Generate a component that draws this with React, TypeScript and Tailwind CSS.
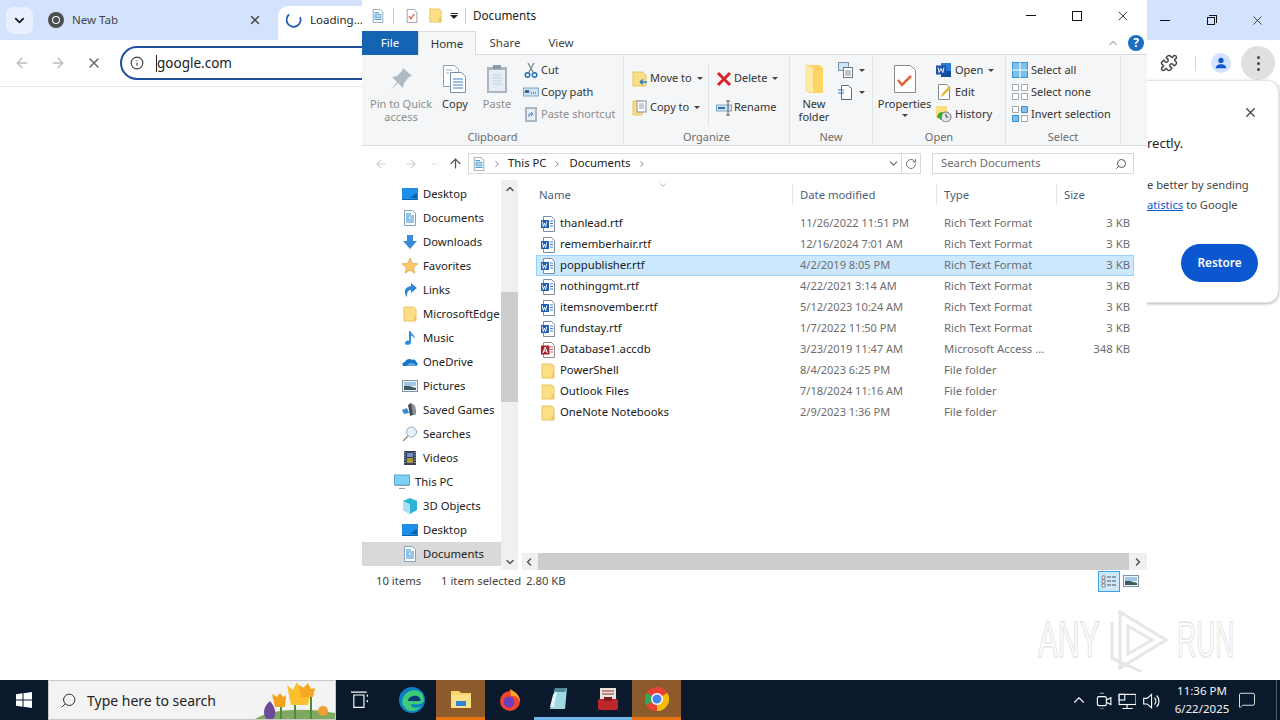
import type { ReactNode } from "react";
import { ArrowLeft, ArrowRight, ArrowUp, ChevronDown, ChevronLeft, ChevronRight, ChevronUp, Info, MessageSquare, Puzzle, RotateCw, Search, X } from "lucide-react";

const Svg = ({ s = 16, v = 16, children }: { s?: number; v?: number; children: ReactNode }) => (
  <svg width={s} height={s} viewBox={`0 0 ${v} ${v}`} className="shrink-0">
    {children}
  </svg>
);

const FolderIcon = ({ s = 16 }: { s?: number }) => (
  <Svg s={s}>
    <path d="M2 1h9.500L14 3v12H2z" fill="#fcdf85" stroke="#e8c465" />
    <path d="M11.500 10h2.500v5h-2.500z" fill="#eec95c" />
  </Svg>
);

const DocsIcon = ({ s = 16 }: { s?: number }) => (
  <Svg s={s}>
    <path d="M2.500.500h8l3 3v12h-11z" fill="#fff" stroke="#8aa0b4" />
    <path d="M4 4h5M4 6h8M8 8h4M4 8h3M4 10h8M4 12h8" stroke="#2f8fd0" />
    <path d="M4 7h3v3H4z" fill="#7fbfe8" />
  </Svg>
);

const WordFile = () => (
  <Svg>
    <path d="M3.500.500h8l3 3v12h-11z" fill="#fff" stroke="#7d8da0" />
    <path d="M10 5h3M10 7.500h3M10 10h3" stroke="#4a7ab8" />
    <rect x="1" y="4" width="8" height="8" fill="#1f5fb0" />
    <path d="M2.300 5.500l1 5 1.200-3.500 1.200 3.500 1-5" stroke="#fff" strokeWidth="0.9" fill="none" />
  </Svg>
);

const AccessFile = () => (
  <Svg>
    <path d="M3.500.500h8l3 3v12h-11z" fill="#fff" stroke="#9a8a8a" />
    <path d="M10 5h3M10 7.500h3M10 10h3" stroke="#b86a6a" />
    <rect x="1" y="3.500" width="8.500" height="9" fill="#a4262c" />
    <path d="M3 11l2.200-6 2.200 6M3.800 9h2.800" stroke="#fff" fill="none" />
  </Svg>
);

const Caret = () => <span className="ml-[5px] inline-block border-x-[3px] border-t-[3px] border-x-transparent border-t-[#444] align-middle" />;

const DesktopIcon = () => (
  <Svg>
    <rect x="0" y="2" width="16" height="11" fill="#1d8fe6" />
    <path d="M0 13h16v1H0zM9 11l6-4v5H9z" fill="#0b5fa8" />
  </Svg>
);

const PicturesIcon = () => (
  <Svg>
    <rect x="0.500" y="2.500" width="15" height="11" fill="#f2f6fa" stroke="#7f93a6" />
    <path d="M2 4h12v4H2z" fill="#9fc6e6" />
    <path d="M2 8l5 0 7 2v2H2z" fill="#3d5a5f" />
  </Svg>
);

const navItems: { label: string; icon: ReactNode; indent?: boolean; selected?: boolean }[] = [
  { label: "Desktop", icon: <DesktopIcon /> },
  { label: "Documents", icon: <DocsIcon /> },
  { label: "Downloads", icon: <Svg><path d="M5 1h6v6h4l-7 8-7-8h4z" fill="#3b8ad9" /></Svg> },
  { label: "Favorites", icon: <Svg><path d="M8 0l2.300 5.300 5.700.5-4.300 3.800 1.300 5.600L8 12.200l-5 3 1.300-5.600L0 5.800l5.700-.5z" fill="#fbc864" stroke="#cf9a4a" strokeWidth="0.6" /></Svg> },
  { label: "Links", icon: <Svg><path d="M9 1l6 5-6 5V8C6 8 5 10 5 15 2 12 1 5 9 4z" fill="#2f86d8" /></Svg> },
  { label: "MicrosoftEdge", icon: <FolderIcon /> },
  { label: "Music", icon: <Svg><path d="M7 1h1.500c.5 3 5 4 4 8-.5-2-2-3-3.500-3.500V12.500C9 15 3 16 3 13c0-2 3-3 4-2z" fill="#2e8be0" /></Svg> },
  { label: "OneDrive", icon: <Svg><path d="M1 12c-1.500-2 0-4 2-4 1-3 5-4 7-2 2-1 4 0 4 2 2 0 2 4 0 4z" fill="#1277c9" /><path d="M5 12c0-2 2-3 4-3s5 1 5 3z" fill="#fff" opacity="0.35" /></Svg> },
  { label: "Pictures", icon: <PicturesIcon /> },
  { label: "Saved Games", icon: <Svg><path d="M0 8l5-2 2 5-5 1z" fill="#3e8ad0" /><path d="M6 3l3-2 4 3 1 8-6 2z" fill="#444c55" /><path d="M9 1l4 3 1 8-3 1z" fill="#8a929a" /></Svg> },
  { label: "Searches", icon: <Svg><circle cx="9.500" cy="6" r="5" fill="#e6f1fa" stroke="#8fa8bf" /><path d="M6 10l-5 5" stroke="#8a8f95" strokeWidth="1.500" /></Svg> },
  { label: "Videos", icon: <Svg><rect x="2" y="1" width="12" height="14" fill="#3a3f5a" /><path d="M5 3h6v4H5z" fill="#6f8fd0" /><path d="M5 8h6v5H5z" fill="#a89a3a" /><path d="M3 2v12M13 2v12" stroke="#ddd" strokeDasharray="1 1.500" /></Svg> },
  { label: "This PC", indent: true, icon: <Svg><rect x="0.500" y="1" width="15" height="10" fill="#7fd0f5" stroke="#5aa5d0" /><path d="M1 11h14v1H1zM5 14h6v1H5z" fill="#8aa0b4" /></Svg> },
  { label: "3D Objects", icon: <Svg><path d="M8 0l7 3v9l-7 4-7-4V3z" fill="#2cb3d8" /><path d="M1 3l7 3v10l-7-4z" fill="#a8e2f2" /></Svg> },
  { label: "Desktop", icon: <DesktopIcon /> },
  { label: "Documents", icon: <DocsIcon />, selected: true },
];

const files = [
  { name: "thanlead.rtf", date: "11/26/2022 11:51 PM", type: "Rich Text Format", size: "3 KB", icon: <WordFile /> },
  { name: "rememberhair.rtf", date: "12/16/2024 7:01 AM", type: "Rich Text Format", size: "3 KB", icon: <WordFile /> },
  { name: "poppublisher.rtf", date: "4/2/2019 8:05 PM", type: "Rich Text Format", size: "3 KB", icon: <WordFile />, selected: true },
  { name: "nothinggmt.rtf", date: "4/22/2021 3:14 AM", type: "Rich Text Format", size: "3 KB", icon: <WordFile /> },
  { name: "itemsnovember.rtf", date: "5/12/2023 10:24 AM", type: "Rich Text Format", size: "3 KB", icon: <WordFile /> },
  { name: "fundstay.rtf", date: "1/7/2022 11:50 PM", type: "Rich Text Format", size: "3 KB", icon: <WordFile /> },
  { name: "Database1.accdb", date: "3/23/2019 11:47 AM", type: "Microsoft Access ...", size: "348 KB", icon: <AccessFile /> },
  { name: "PowerShell", date: "8/4/2023 6:25 PM", type: "File folder", size: "", icon: <FolderIcon /> },
  { name: "Outlook Files", date: "7/18/2024 11:16 AM", type: "File folder", size: "", icon: <FolderIcon /> },
  { name: "OneNote Notebooks", date: "2/9/2023 1:36 PM", type: "File folder", size: "", icon: <FolderIcon /> },
];

const BigButton = ({ w, icon, lines, muted, caret }: { w: number; icon: ReactNode; lines: string[]; muted?: boolean; caret?: boolean }) => (
  <div style={{ width: w }} className={`flex shrink-0 flex-col items-center pt-[8px] text-center leading-[13px] ${muted ? "text-[#8d8d8d]" : "text-[#333]"}`}>
    <div className="mb-[2px] flex h-[32px] items-center justify-center">{icon}</div>
    {lines.map((l) => (
      <div key={l} className="whitespace-nowrap">{l}</div>
    ))}
    {caret && <span className="mt-[4px] border-x-[3px] border-t-[3px] border-x-transparent border-t-[#444]" />}
  </div>
);

const SmallRow = ({ icon, label, muted, caret, h = 22, w = 18 }: { icon: ReactNode; label: string; muted?: boolean; caret?: boolean; h?: number; w?: number }) => (
  <div style={{ height: h }} className={`flex items-center whitespace-nowrap ${muted ? "text-[#8d8d8d]" : "text-[#333]"}`}>
    <div style={{ width: w }} className="flex shrink-0 items-center">{icon}</div>
    {label}
    {caret && <Caret />}
  </div>
);

const Group = ({ w, label, children }: { w: number; label: string; children: ReactNode }) => (
  <div style={{ width: w }} className="flex h-full shrink-0 flex-col border-r border-[#e1e2e4]">
    <div className="flex h-[74px]">{children}</div>
    <div className="flex-1 pt-[3px] text-center text-[#6d6d6d]">{label}</div>
  </div>
);

const Ribbon = () => (
  <div className="flex h-[92px] border-y border-[#dadbdc] bg-[#f5f6f7] text-[11px]">
    <Group w={262} label="Clipboard">
      <div className="flex pl-[6px]">
        <BigButton w={66} muted lines={["Pin to Quick", "access"]} icon={<Svg s={26} v={26}><path d="M15 2l9 8-3 1-5 6-1 5-5-5-7 7 6-8-5-5 5-1 5-5z" fill="#aeb9c6" /></Svg>} />
        <BigButton w={42} lines={["Copy"]} icon={<svg width="26" height="30" viewBox="0 0 26 30"><path d="M1.500 1.500h11l4 4v17h-15z" fill="#fff" stroke="#8aa0b4" /><path d="M8.500 8.500h11l4 4v16h-15z" fill="#fff" stroke="#7a90a6" /><path d="M11 15h10M11 18h10M11 21h10M11 24h10" stroke="#3f82c8" /><path d="M4 6h6M4 9h3" stroke="#9fb6cc" /></svg>} />
        <BigButton w={42} muted lines={["Paste"]} icon={<svg width="22" height="30" viewBox="0 0 22 30"><rect x="1" y="3" width="20" height="26" fill="#aab6c2" /><rect x="3" y="6" width="16" height="21" fill="#e6edf5" /><rect x="7" y="1" width="8" height="4" fill="#8d99a5" /><path d="M6 11h10M6 14h10M6 17h10M6 20h10" stroke="#c3d2e2" /></svg>} />
        <div className="ml-[5px] flex flex-col pt-[4px]">
          <SmallRow label="Cut" icon={<Svg><circle cx="4.500" cy="13" r="2.300" fill="none" stroke="#1f6fb5" strokeWidth="1.500" /><circle cx="11.500" cy="13" r="2.300" fill="none" stroke="#1f6fb5" strokeWidth="1.500" /><path d="M5.500 11L11 1M10.500 11L5 1" stroke="#77818c" strokeWidth="1.200" /></Svg>} />
          <SmallRow label="Copy path" icon={<Svg><rect x="0.500" y="4" width="15" height="8" fill="#cfe3f5" stroke="#7ea6c8" /><path d="M2 9l1-3 1 3 1-3 1 3M8 9h1M10 9h1M12 9h1" stroke="#24507a" fill="none" /></Svg>} />
          <SmallRow label="Paste shortcut" muted icon={<Svg><rect x="2" y="1" width="12" height="15" fill="#aab6c2" /><rect x="4" y="3" width="8" height="11" fill="#e6edf5" /><path d="M6 11V8h4M8 6l2 2-2 2" stroke="#4f80b3" fill="none" /></Svg>} />
        </div>
      </div>
    </Group>
    <Group w={166} label="Organize">
      <div className="flex pl-[8px] pt-[9px]">
        <div className="flex w-[77px] flex-col border-r border-[#e1e2e4]">
          <SmallRow h={29} label="Move to" caret icon={<Svg s={16}><path d="M1 1h9l4 3v11H1z" fill="#fcdf85" stroke="#e8c465" /><path d="M15 11H8M8 11l3-2.500M8 11l3 2.500" stroke="#2f7fc8" strokeWidth="1.500" /></Svg>} />
          <SmallRow h={29} label="Copy to" caret icon={<Svg s={16}><path d="M1 1h9v14H1z" fill="#fcdf85" stroke="#e8c465" /><rect x="5" y="1" width="9" height="11" fill="#fff" stroke="#7d8da0" /><path d="M7 4h5M7 6h5M7 8h5" stroke="#8aa0b4" /></Svg>} />
        </div>
        <div className="flex flex-col pl-[7px]">
          <SmallRow h={29} label="Delete" caret icon={<Svg s={16}><path d="M2 2l12 12M14 2L2 14" stroke="#d8232a" strokeWidth="3" /></Svg>} />
          <SmallRow h={29} label="Rename" icon={<Svg s={16}><rect x="0.500" y="5" width="15" height="6" fill="#cfe3f5" stroke="#7ea6c8" /><path d="M2 8h7" stroke="#2f6fb0" strokeWidth="2" /><path d="M12 1v14M10 1h4M10 15h4" stroke="#555" /></Svg>} />
        </div>
      </div>
    </Group>
    <Group w={83} label="New">
      <div className="flex">
        <BigButton w={48} lines={["New", "folder"]} icon={<svg width="20" height="30" viewBox="0 0 20 30"><path d="M1 1h15l3 3v25H5l-4-3z" fill="#fbd667" /><path d="M1 1l8 3v25l-8-3z" fill="#fdeaa6" /></svg>} />
        <div className="flex flex-col pt-[4px]">
          <SmallRow h={22} w={24} label="" icon={<div className="flex items-center"><Svg><rect x="0.500" y="0.500" width="10" height="8" fill="#cfe3f5" stroke="#7a90a6" /><rect x="5.500" y="5.500" width="9" height="10" fill="#fff" stroke="#6a7a8a" /><path d="M7 9h6M7 11h6M7 13h6" stroke="#888" /></Svg><Caret /></div>} />
          <SmallRow h={22} w={24} label="" icon={<div className="flex items-center"><Svg><path d="M3.500 1.500h7l3 3v11h-10z" fill="#fff" stroke="#5a6a7a" /><path d="M0 6h6M0 9h6" stroke="#2f7fc8" /></Svg><Caret /></div>} />
        </div>
      </div>
    </Group>
    <Group w={133} label="Open">
      <div className="flex">
        <BigButton w={63} caret lines={["Properties"]} icon={<svg width="22" height="28" viewBox="0 0 22 28"><path d="M.5.500h16l5 5v22H.500z" fill="#fff" stroke="#8a8a8a" /><path d="M4 15l4 5 9-9" stroke="#e0643a" strokeWidth="2.500" fill="none" /></svg>} />
        <div className="flex flex-col pt-[4px]">
          <SmallRow label="Open" caret w={19} icon={<Svg><path d="M5 1h10v14H5z" fill="#2b7cd3" /><path d="M5 9h10v6H5z" fill="#124a9e" /><rect x="0" y="3.500" width="10" height="9" fill="#1a52a8" /><path d="M2 5.500l1.200 5 1.800-4 1.800 4 1.200-5" stroke="#fff" fill="none" /></Svg>} />
          <SmallRow label="Edit" w={19} icon={<Svg><path d="M2.500.500h8l3 3v12h-11z" fill="#fff" stroke="#8a8a8a" /><path d="M5 13l1-3 7-8 2 2-8 8z" fill="#e2b93a" /></Svg>} />
          <SmallRow label="History" w={19} icon={<Svg><rect x="0" y="0" width="11" height="12" fill="#fcdf85" /><circle cx="10" cy="11" r="5" fill="#dfe5ea" stroke="#777" /><path d="M1 11c1-4 3-5 6-5L5 14z" fill="#3fa535" /><path d="M10 8v3h2" stroke="#444" fill="none" /></Svg>} />
        </div>
      </div>
    </Group>
    <Group w={115} label="Select">
      <div className="flex flex-col pl-[6px] pt-[4px]">
        <SmallRow label="Select all" w={19} icon={<Svg><rect x="0.500" y="0.500" width="15" height="15" fill="#7cc0ee" stroke="#3d8fd0" /><path d="M8 0v16M0 8h16" stroke="#fff" /></Svg>} />
        <SmallRow label="Select none" w={19} icon={<Svg><path d="M.5.500h6v6h-6zM9.500.500h6v6h-6zM.5 9.500h6v6h-6zM9.500 9.500h6v6h-6z" fill="#fff" stroke="#a0a8b0" /></Svg>} />
        <SmallRow label="Invert selection" w={19} icon={<Svg><path d="M9.500.500h6v6h-6zM.5 9.500h6v6h-6z" fill="#7cc0ee" stroke="#3d8fd0" /><path d="M.5.500h6v6h-6zM9.500 9.500h6v6h-6z" fill="#fff" stroke="#a0a8b0" /></Svg>} />
      </div>
    </Group>
  </div>
);

const Explorer = () => (
  <div className="absolute left-[362px] top-0 flex h-[592px] w-[785px] flex-col bg-white text-[11.3px] text-[#222]">
    {/* title bar */}
    <div className="flex h-[31px] items-center pl-[9px]">
      <DocsIcon s={14} />
      <div className="ml-[8px] h-[16px] w-px bg-[#ccc]" />
      <div className="ml-[11px]"><Svg s={14}><path d="M2.500.500h8l3 3v12h-11z" fill="#fff" stroke="#999" /><path d="M4.500 8l2 3 4-5" stroke="#e0643a" strokeWidth="1.500" fill="none" /></Svg></div>
      <div className="ml-[9px]"><FolderIcon s={15} /></div>
      <div className="ml-[7px] flex flex-col items-center">
        <span className="mb-[1px] h-px w-[7px] bg-[#222]" />
        <span className="border-x-[4px] border-t-[4px] border-x-transparent border-t-[#222]" />
      </div>
      <div className="ml-[7px] h-[16px] w-px bg-[#ccc]" />
      <span className="ml-[7px] text-[11.7px]">Documents</span>
      <div className="ml-auto flex items-center">
        <div className="flex w-[46px] items-center justify-center"><span className="h-px w-[10px] bg-[#111]" /></div>
        <div className="flex w-[46px] items-center justify-center"><span className="h-[10px] w-[10px] border border-[#111]" /></div>
        <div className="flex w-[46px] items-center justify-center"><X size={16} strokeWidth={1.200} color="#111" /></div>
        <div className="w-[1px]" />
      </div>
    </div>
    {/* tabs */}
    <div className="relative z-10 -mb-px flex h-[24px] items-stretch text-[11.5px]">
      <div className="flex w-[56px] items-center justify-center bg-[#1464b4] text-white">File</div>
      <div className="flex w-[58px] items-center justify-center border-x border-t border-[#dadbdc] bg-[#f5f6f7] text-[#333]">Home</div>
      <div className="flex w-[58px] items-center justify-center text-[#444]">Share</div>
      <div className="flex w-[54px] items-center justify-center text-[#444]">View</div>
      <div className="ml-auto flex items-center gap-[8px] pr-[3px]">
        <ChevronUp size={14} color="#bbb" />
        <span className="flex h-[16px] w-[16px] items-center justify-center rounded-full bg-[#1b6ec2] text-[12px] font-bold text-white">?</span>
      </div>
    </div>
    <Ribbon />
    {/* address row */}
    <div className="flex h-[34px] shrink-0 items-center pt-px">
      <div className="ml-[12px] flex w-[94px] items-center">
        <ArrowLeft size={14} color="#d0d0d0" />
        <ArrowRight size={14} color="#d0d0d0" className="ml-[16px]" />
        <ChevronDown size={10} color="#d0d0d0" className="ml-[11px]" />
        <ArrowUp size={15} color="#555" className="ml-[9px]" />
      </div>
      <div className="flex h-[21px] w-[434px] items-center border border-[#d9d9d9] pl-[3px]">
        <DocsIcon s={14} />
        <ChevronRight size={10} color="#666" className="ml-[6px]" />
        <span className="ml-[6px]">This PC</span>
        <ChevronRight size={10} color="#666" className="ml-[5px]" />
        <span className="ml-[8px]">Documents</span>
        <ChevronRight size={10} color="#666" className="ml-[7px]" />
        <ChevronDown size={13} color="#666" className="ml-auto mr-[1px]" />
      </div>
      <div className="flex h-[21px] w-[19px] items-center justify-center border-y border-r border-[#d9d9d9]"><RotateCw size={12} color="#777" /></div>
      <div className="ml-[11px] flex h-[21px] w-[202px] items-center justify-between border border-[#d9d9d9] pl-[8px] pr-[6px] text-[#6d6d6d]">
        Search Documents
        <Search size={12} color="#555" className="-scale-x-100" />
      </div>
    </div>
    {/* body */}
    <div className="flex h-[390px] shrink-0">
      <div className="h-full w-[139px] overflow-hidden pt-[2px]">
        {navItems.map((n, i) => (
          <div key={i} className={`flex h-[24px] items-center whitespace-nowrap ${n.indent ? "pl-[32px]" : "pl-[40px]"} ${n.selected ? "bg-[#d9d9d9]" : ""}`}>
            {n.icon}
            <span className="ml-[5px]">{n.label}</span>
          </div>
        ))}
      </div>
      <div className="flex h-full w-[17px] flex-col items-center bg-[#f0f0f0]">
        <div className="flex h-[17px] items-center"><ChevronUp size={12} strokeWidth={3} color="#555" /></div>
        <div className="mt-[95px] h-[110px] w-full bg-[#cdcdcd]" />
        <div className="mt-auto flex h-[17px] items-center"><ChevronDown size={12} strokeWidth={3} color="#555" /></div>
      </div>
      <div className="flex min-w-0 flex-1 flex-col">
        <div className="relative flex h-[33px] shrink-0 pl-[15px] pt-[4px] text-[#4c607a]">
          <ChevronDown size={10} color="#aaa" className="absolute left-[140px] top-0" />
          <div className="flex h-[21px] w-[260px] items-center border-r border-[#e5e5e5] pl-[6px] pt-px">Name</div>
          <div className="flex h-[21px] w-[144px] items-center border-r border-[#e5e5e5] pl-[7px] pt-px">Date modified</div>
          <div className="flex h-[21px] w-[120px] items-center border-r border-[#e5e5e5] pl-[7px] pt-px">Type</div>
          <div className="flex h-[21px] w-[81px] items-center pl-[7px] pt-px">Size</div>
        </div>
        <div className="flex-1 pl-[18px]">
          {files.map((f) => (
            <div key={f.name} className={`flex h-[21px] w-[598px] items-center border ${f.selected ? "border-[#99d1ff] bg-[#cce8ff]" : "border-transparent"}`}>
              <div className="flex w-[263px] items-center pl-[3px] text-[#1a1a1a]">
                {f.icon}
                <span className="ml-[4px]">{f.name}</span>
              </div>
              <div className="w-[144px] text-[11px] text-[#6d6d6d]">{f.date}</div>
              <div className="w-[120px] text-[#6d6d6d]">{f.type}</div>
              <div className="w-[66px] text-right text-[#6d6d6d]">{f.size}</div>
            </div>
          ))}
        </div>
        <div className="ml-[4px] flex h-[17px] shrink-0 items-center bg-[#f0f0f0] pl-px">
          <ChevronLeft size={12} strokeWidth={3} color="#555" />
          <div className="ml-[3px] h-full w-[591px] bg-[#cdcdcd]" />
          <ChevronRight size={12} strokeWidth={3} color="#555" className="ml-auto mr-[3px]" />
        </div>
      </div>
    </div>
    {/* status bar */}
    <div className="flex h-[22px] items-center whitespace-nowrap pl-[14px] text-[#444]">
      <span className="w-[65px]">10 items</span>
      <span className="w-[85px]">1 item selected</span>
      <span>2.80 KB</span>
      <div className="ml-auto mr-[8px] flex items-center gap-[3px]">
        <div className="flex h-[21px] w-[22px] items-center justify-center border border-[#3fa0e8] bg-[#cce8ff]">
          <Svg s={16}><path d="M1 3h3v3H1zM1 7h3v3H1zM1 11h3v3H1z" fill="#fff" stroke="#555" strokeWidth="0.7" /><path d="M6 4h4M11 4h4M6 8h4M11 8h4M6 12h4M11 12h4" stroke="#555" /></Svg>
        </div>
        <PicturesIcon />
      </div>
    </div>
  </div>
);

const ChromeLogo = ({ s = 16, mono }: { s?: number; mono?: boolean }) => (
  <Svg s={s} v={24}>
    <circle cx="12" cy="12" r="12" fill={mono ? "#4a4d52" : "#ea4335"} />
    {!mono && <path d="M12 12L1.500 18A12 12 0 0 1 1.600 6zM12 12l10.400-6A12 12 0 0 1 12 24z" fill="#34a853" />}
    {!mono && <path d="M12 12l10.400-6A12 12 0 0 1 12 24z" fill="#fbbc04" />}
    <circle cx="12" cy="12" r="6" fill="#fff" />
    <circle cx="12" cy="12" r="4.500" fill={mono ? "#4a4d52" : "#4285f4"} />
  </Svg>
);

const ChromeWindow = () => (
  <div className="flex h-full flex-col font-['Noto_Sans',sans-serif]">
    <div className="flex h-[40px] shrink-0 items-stretch bg-[#d3e3fd]">
      <div className="ml-[6px] mt-[7px] flex h-[27px] w-[27px] items-center justify-center rounded-[8px] bg-[#e8f0fe]">
        <ChevronDown size={15} strokeWidth={3} color="#1f1f1f" />
      </div>
      <div className="flex w-[245px] items-center pl-[15px] pr-[16px] text-[11.5px] text-[#444746]">
        <ChromeLogo mono />
        <span className="ml-[8px]">New Tab</span>
        <X size={14} strokeWidth={2.500} color="#444746" className="ml-auto" />
      </div>
      <div className="mt-[6px] flex flex-1 items-center rounded-t-[10px] bg-white pb-[6px] pl-[8px] text-[11.5px] text-[#1f1f1f]">
        <svg width="16" height="16" viewBox="0 0 16 16" className="shrink-0"><path d="M3 2.500A7 7 0 1 0 14 5" fill="none" stroke="#1f5fb8" strokeWidth="1.800" /></svg>
        <span className="ml-[8px]">Loading...</span>
      </div>
      <div className="flex w-[138px] shrink-0 items-center">
        <div className="flex w-[46px] justify-center"><span className="h-px w-[10px] bg-[#111]" /></div>
        <div className="flex w-[46px] justify-center">
          <span className="relative mt-[2px] h-[8px] w-[8px] border border-[#111]">
            <span className="absolute -right-[3px] -top-[3px] h-[8px] w-[8px] border-r border-t border-[#111]" />
          </span>
        </div>
        <div className="flex w-[46px] justify-center"><X size={15} strokeWidth={1.200} color="#111" /></div>
      </div>
    </div>
    <div className="flex h-[47px] shrink-0 items-center border-b border-[#ece7e3] bg-white">
      <ArrowLeft size={16} color="#bcbcbc" className="ml-[14px]" />
      <ArrowRight size={16} color="#bcbcbc" className="ml-[20px]" />
      <X size={16} strokeWidth={2.200} color="#5f6368" className="ml-[20px]" />
      <div className="ml-[18px] flex h-[34px] w-[900px] items-center rounded-full border-2 border-[#1f4f9d] pl-[8px] text-[13.500px] text-[#202124]">
        <Info size={14} color="#444" />
        <span className="relative ml-[13px]">
          <span className="absolute -left-px top-[2px] h-[17px] w-px bg-[#222]" />
          google.com
        </span>
      </div>
      <div className="ml-auto flex items-center pr-[5px]">
        <Puzzle size={18} color="#444746" />
        <div className="ml-[17px] h-[15px] w-px bg-[#d8d8d8]" />
        <div className="ml-[15px] flex h-[20px] w-[20px] items-center justify-center rounded-full bg-[#d3e3fd]">
          <Svg s={14}><circle cx="8" cy="5" r="3" fill="#0b57d0" /><path d="M2 14c0-3 3-4.500 6-4.500s6 1.500 6 4.500z" fill="#0b57d0" /></Svg>
        </div>
        <div className="ml-[10px] flex h-[34px] w-[34px] flex-col items-center justify-center gap-[3px] rounded-full bg-[#e0e0e0]">
          <span className="h-[3px] w-[3px] rounded-full bg-[#444746]" />
          <span className="h-[3px] w-[3px] rounded-full bg-[#444746]" />
          <span className="h-[3px] w-[3px] rounded-full bg-[#444746]" />
        </div>
      </div>
    </div>
    <div className="relative flex-1 bg-white">
      {/* restore bubble, the explorer window hides its left part */}
      <div className="absolute left-[1100px] top-[-7px] h-[223px] w-[179px] rounded-[12px] border border-[#e3e3e3] bg-white pl-[46px] shadow-[0_1px_3px_rgba(0,0,0,0.3)]">
        <X size={15} strokeWidth={2} color="#444" className="absolute right-[20px] top-[24px]" />
        <div className="mt-[53px] whitespace-nowrap text-[13px] text-[#1f1f1f]">rectly.</div>
        <div className="mt-[21px] whitespace-nowrap text-[11.200px] leading-[20px] text-[#444746]">e better by sending</div>
        <div className="whitespace-nowrap text-[11.200px] leading-[20px] text-[#444746]">
          <span className="text-[#0b57d0] underline">atistics</span> to Google
        </div>
        <div className="absolute bottom-[20px] right-[20px] flex h-[38px] w-[77px] items-center justify-center rounded-full bg-[#0b57d0] text-[11.800px] font-semibold text-white">Restore</div>
      </div>
    </div>
  </div>
);

const Watermark = () => (
  <div className="absolute left-[1038px] top-[608px] flex h-[64px] w-[194px] items-center font-['Liberation_Sans',sans-serif] text-[50px] leading-none text-transparent [-webkit-text-stroke:1.500px_#e6e6e6]">
    <span className="w-[70px] origin-left scale-x-[0.6] whitespace-nowrap">ANY</span>
    <svg width="62" height="64" viewBox="0 0 62 64" className="shrink-0"><path d="M12 4l46 28-46 28zM4 14v36l30 14M20 18v28l24-14z" fill="none" stroke="#e6e6e6" strokeWidth="3" /></svg>
    <span className="ml-[7px] w-[55px] origin-left scale-x-[0.53] whitespace-nowrap">RUN</span>
  </div>
);

const TaskIcon = ({ w = 49, active, running, children }: { w?: number; active?: boolean; running?: boolean; children: ReactNode }) => (
  <div style={{ width: w }} className={`flex h-full shrink-0 items-center justify-center ${active ? "border-b-[3px] border-[#e8720c] bg-[#8c5a2b]" : running ? "border-b-[3px] border-[#6fb5e8]" : ""}`}>
    {children}
  </div>
);

const TrayCell = ({ children }: { children: ReactNode }) => <div className="flex w-[24px] justify-center">{children}</div>;

const Taskbar = () => (
  <div className="flex h-[40px] shrink-0 items-stretch bg-[#0a1a2c] font-['Noto_Sans',sans-serif] text-white">
    <div className="flex w-[48px] items-center justify-center">
      <Svg><path d="M0 2.200l6.500-.9v6.300H0zM7.500 1.200L16 0v7.600H7.500zM0 8.500h6.500v6.200L0 13.800zM7.500 8.500H16V16l-8.500-1.200z" fill="#fff" /></Svg>
    </div>
    <div className="relative flex w-[288px] items-center overflow-hidden border border-[#c8c8c8] bg-[#f3f3f3] pl-[11px] text-[14px] text-[#222]">
      <Search size={17} strokeWidth={1.300} color="#222" className="-scale-x-100" />
      <span className="ml-[10px]">Type here to search</span>
      <svg width="80" height="38" viewBox="0 0 80 38" className="absolute bottom-0 right-0">
        <path d="M0 38c15-10 50-12 80-6v6z" fill="#7fa860" />
        <path d="M12 38c-6-6-2-14 3-18 4 5 8 12 3 18z" fill="#6a4a9c" />
        <path d="M40 38V16M56 38V10M26 38V22" stroke="#4d8a3a" strokeWidth="2" />
        <path d="M20 26l-3-13 5 3 3-4 3 4 3-2-1 12z" fill="#f3a41c" />
        <path d="M36 24l-4-20 6 5 4-8 4 8 5-5 1 8 4-2-3 14z" fill="#fbc02d" />
        <path d="M46 16l-2-12 5 3 4-5 3 6 4-1-2 9z" fill="#f4a81f" />
        <circle cx="68" cy="30" r="5" fill="#f0a030" />
      </svg>
    </div>
    <TaskIcon w={48}>
      <Svg s={18}><path d="M2.500 3.500h9v11h-9zM0 1h14M0 17h14M14.500 3v2M14.500 8v2" stroke="#fff" fill="none" /></Svg>
    </TaskIcon>
    <div className="ml-[3px] flex">
      <TaskIcon>
        <Svg s={26} v={24}><circle cx="12" cy="12" r="12" fill="#0c7cc4" /><path d="M3 16C2 8 8 3 14 3c6 0 9 4 9 9 0 3-3 4-6 4h-6c0 3 4 4 9 2-3 5-9 5-13 3" fill="#3ccb7a" /><path d="M8 15c0-5 3-7 7-7s5 3 5 5H8z" fill="#0a3a78" /></Svg>
      </TaskIcon>
      <TaskIcon active>
        <Svg s={22} v={22}><path d="M1 3h8l2 2h10v15H1z" fill="#f8d568" /><rect x="1" y="7" width="20" height="13" fill="#fbe08a" /><rect x="6" y="13" width="10" height="5" fill="#2f86d8" /></Svg>
      </TaskIcon>
      <TaskIcon>
        <Svg s={24} v={24}><circle cx="12" cy="13" r="10" fill="#f0442f" /><path d="M12 1c6 3 10 7 10 13-2-6-6-6-9-6z" fill="#fca326" /><circle cx="11" cy="14" r="5.500" fill="#6b3fbf" /></Svg>
      </TaskIcon>
      <TaskIcon running>
        <Svg s={24} v={24}><path d="M8 1h12l-2 21H3z" fill="#9fd8de" /><path d="M8 1h12l-2 4H7z" fill="#4f8a9a" /><path d="M6 8l4-4-3 16H3z" fill="#e6f4f6" /></Svg>
      </TaskIcon>
      <TaskIcon running>
        <Svg s={24} v={24}><rect x="4" y="1" width="16" height="14" fill="#e8e4e0" /><path d="M6 4h12M6 7h12" stroke="#a03030" /><rect x="2" y="12" width="20" height="11" rx="2" fill="#c0262d" /><rect x="8" y="10" width="8" height="4" fill="#801a1f" /></Svg>
      </TaskIcon>
      <TaskIcon active>
        <ChromeLogo s={24} />
      </TaskIcon>
    </div>
    <div className="ml-auto flex items-center text-[#f2f2f2]">
      <TrayCell><ChevronUp size={18} strokeWidth={1.500} /></TrayCell>
      <TrayCell><Svg s={18}><rect x="3" y="5" width="8" height="8" rx="1.500" fill="none" stroke="#fff" /><path d="M11 8l4-2v6l-4-2" fill="none" stroke="#fff" /><path d="M5 2h4M5 16h4" stroke="#aaa" /></Svg></TrayCell>
      <TrayCell><Svg s={18}><rect x="1" y="3" width="15" height="9" fill="none" stroke="#fff" /><rect x="1" y="3" width="5" height="5" fill="#0a1a2c" stroke="#fff" /><path d="M8 12v3M4 15.500h9" stroke="#fff" /></Svg></TrayCell>
      <TrayCell><Svg s={18}><path d="M1.500 6.500h3l4-3.500v12l-4-3.500h-3z" fill="none" stroke="#fff" /><path d="M11 6a4 4 0 0 1 0 6M13 4a7 7 0 0 1 0 10" fill="none" stroke="#fff" /></Svg></TrayCell>
      <div className="ml-[3px] w-[72px] text-center text-[11.500px] leading-[18px]">
        <div>11:36 PM</div>
        <div>6/22/2025</div>
      </div>
      <div className="w-[18px]"><MessageSquare size={18} strokeWidth={1.200} /></div>
      <div className="ml-[20px] h-full w-[1px] bg-[#4a5a6a]" />
      <div className="w-[3px]" />
    </div>
  </div>
);

export default function App() {
  return (
    <div className="relative flex h-[720px] w-[1280px] flex-col overflow-hidden bg-white">
      <div className="relative h-[680px] shrink-0 font-['Noto_Sans',sans-serif]">
        <ChromeWindow />
        <Explorer />
        <Watermark />
      </div>
      <Taskbar />
    </div>
  );
}
